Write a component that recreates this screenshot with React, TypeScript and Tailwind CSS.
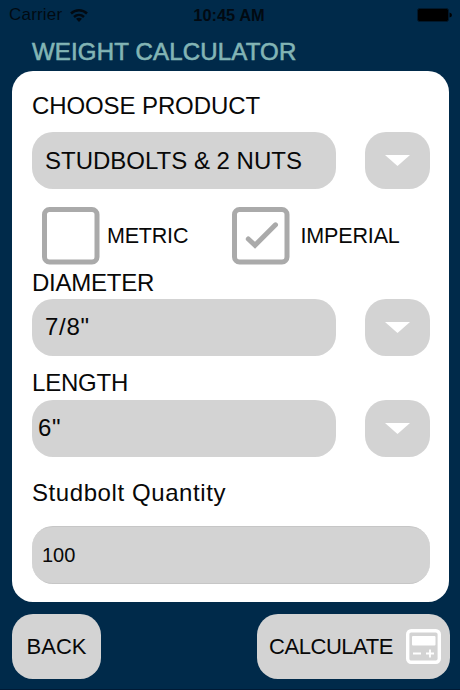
import React from "react";

function Label({ children, className = "" }: { children: React.ReactNode; className?: string }) {
  return <div className={`whitespace-nowrap text-[24px] leading-[28px] ${className}`}>{children}</div>;
}

function SelectRow({ value, className = "" }: { value: string; className?: string }) {
  return (
    <div className="flex h-[57px] justify-between">
      <div className={`flex w-[304px] items-center whitespace-nowrap rounded-[21px] bg-[#d3d3d3] text-[24px] ${className}`}>
        {value}
      </div>
      <button aria-label="Open list" className="flex w-[65px] items-center justify-center rounded-[21px] bg-[#d3d3d3]">
        <svg width="25" height="11" viewBox="0 0 25 11" fill="#fff">
          <path d="M0 0H25L12.5 11Z" />
        </svg>
      </button>
    </div>
  );
}

function Check({ checked }: { checked?: boolean }) {
  return (
    <svg width="58" height="58" viewBox="0 0 58 58" fill="none" stroke="#aaa">
      <rect x="2.5" y="2.5" width="52.5" height="52.5" rx="5" strokeWidth="5" />
      {checked && <path d="M16.3 32L23 38.3L43.5 17.8" strokeWidth="5" strokeLinecap="round" />}
    </svg>
  );
}

export default function App() {
  return (
    <div className="flex h-[690px] w-[460px] flex-col overflow-hidden border-b border-[#001a35] bg-[#002a4a] font-['Liberation_Sans',Arial,sans-serif] text-[#080808]">
      <header className="grid h-[30px] grid-cols-3 items-center pl-[9px] pr-[8px] text-[17px] leading-[30px] text-[#020a12]">
        <div className="flex items-center gap-[8px]">
          <span className="tracking-[0.2px]">Carrier</span>
          <svg width="18" height="13" viewBox="0 0 18 13" fill="none" stroke="#020a12" strokeWidth="2.5">
            <path d="M1 4.5C5.5.2 12.5.2 17 4.5M4 8C7 5.3 11 5.3 14 8" />
            <path d="M6 9.8Q9 7.6 12 9.8L9 13Z" fill="#020a12" stroke="none" />
          </svg>
        </div>
        <span className="whitespace-nowrap pr-[3px] text-center text-[16.4px] font-bold">10:45 AM</span>
        <svg className="justify-self-end" width="35" height="14" viewBox="0 0 35 14" fill="#000">
          <rect x=".5" y=".5" width="31" height="13" rx="2" stroke="#00182c" />
          <rect x="2" y="2" width="28" height="10" rx="1" />
          <path d="M32.5 4.5Q35 5 35 7T32.5 9.5Z" />
        </svg>
      </header>
      <h1 className="h-[40.5px] whitespace-nowrap pl-[32px] pt-[8px] text-[24px] leading-[28px] tracking-[0.18px] text-[#83b5b5] [-webkit-text-stroke:0.6px_#83b5b5]">
        WEIGHT CALCULATOR
      </h1>
      <main className="ml-[12px] flex h-[531.5px] w-[436.5px] shrink-0 flex-col rounded-[21px] bg-white pl-[20px] pr-[18.5px] pt-[21.5px]">
        <Label className="mb-[12.4px] tracking-[-0.1px]">CHOOSE PRODUCT</Label>
        <SelectRow value="STUDBOLTS & 2 NUTS" className="pl-[13px]" />
        <div className="mt-[17.6px] flex h-[58px] items-center whitespace-nowrap pl-[10px] text-[21.5px]">
          <Check />
          <span className="ml-[7px] w-[124.5px] tracking-[-0.2px]">METRIC</span>
          <Check checked />
          <span className="ml-[11px] tracking-[-0.15px]">IMPERIAL</span>
        </div>
        <Label className="mb-[2px] mt-[4px] tracking-[-0.25px]">DIAMETER</Label>
        <SelectRow value={'7/8"'} className="pl-[13px] tracking-[0.7px]" />
        <Label className="mb-[3px] mt-[12.6px] tracking-[-0.2px]">LENGTH</Label>
        <SelectRow value={'6"'} className="pl-[6px] tracking-[0.7px]" />
        <Label className="mb-[19px] mt-[22px] tracking-[0.58px]">Studbolt Quantity</Label>
        <div className="flex h-[58px] items-center rounded-[21px] border-y border-[#c6c6c6] bg-[#d3d3d3] pl-[10px] text-[20px]">100</div>
      </main>
      <footer className="mt-[11.5px] flex justify-between pl-[12px] pr-[10px] text-[22px]">
        <button className="h-[65px] w-[89px] rounded-[21px] bg-[#d3d3d3]">BACK</button>
        <button className="flex h-[65px] w-[193px] items-center justify-between rounded-[21px] bg-[#d3d3d3] pl-[12px] pr-[9px]">
          <span className="tracking-[-0.45px]">CALCULATE</span>
          <svg width="35" height="35" viewBox="0 0 35 35" fill="none" stroke="#fff">
            <rect x="1.7" y="1.7" width="31.6" height="31.6" rx="3.5" strokeWidth="3.4" />
            <rect x="6" y="7" width="23.5" height="9.5" rx="1" fill="#fff" stroke="none" />
            <path d="M7 24.5H15M20 24.5H28M24 20.5V28.5" strokeWidth="1.8" />
          </svg>
        </button>
      </footer>
    </div>
  );
}
